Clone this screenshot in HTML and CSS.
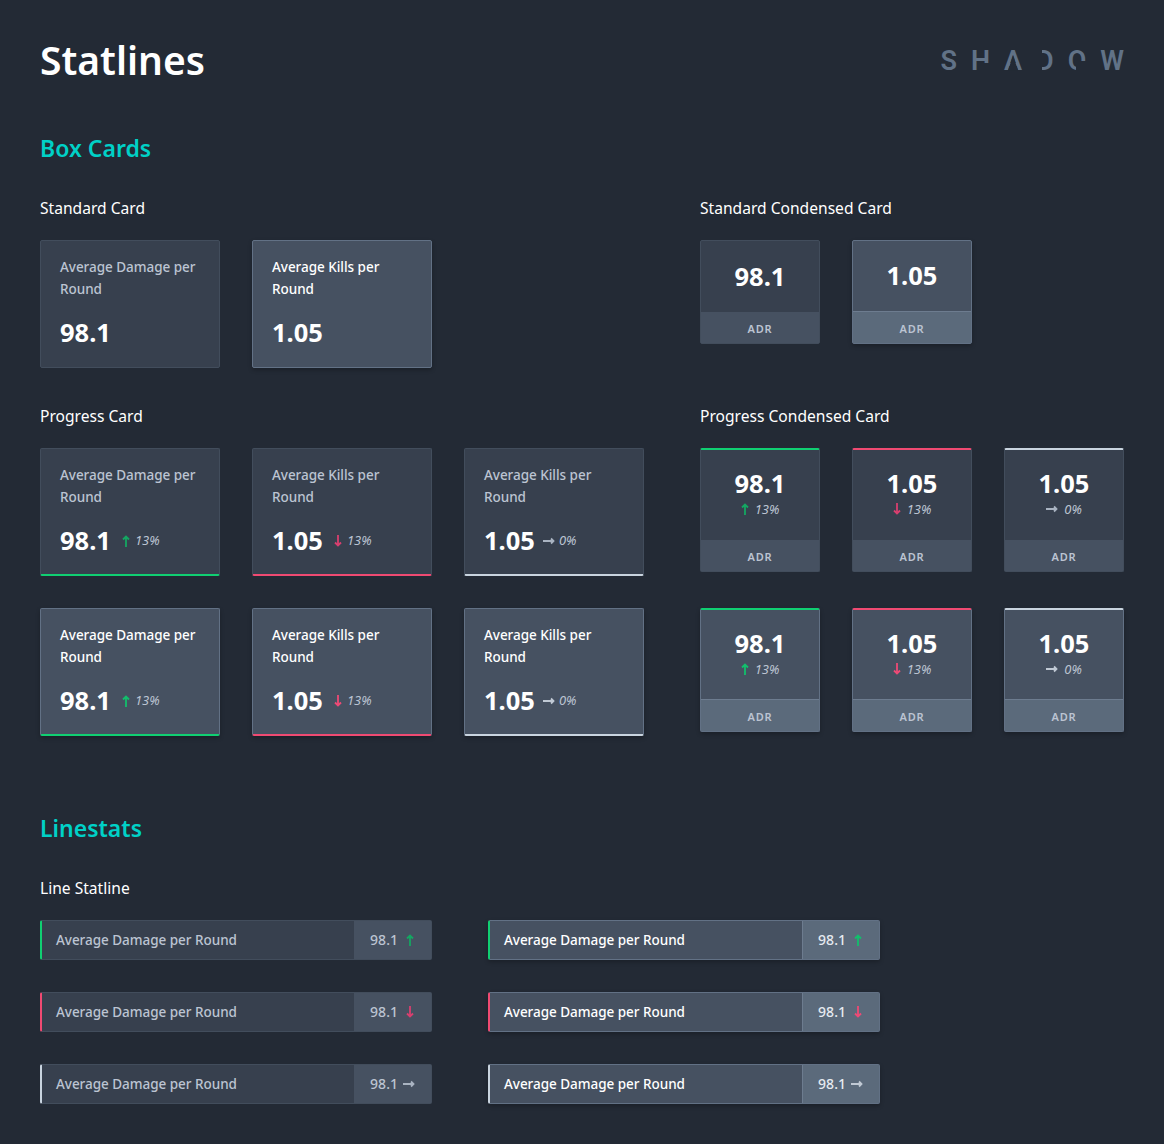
FILE: index.html
```html
<!DOCTYPE html>
<html lang="en">
  <head>
    <meta charset="UTF-8" />
    <meta name="viewport" content="width=device-width, initial-scale=1.0" />
    <title>Statlines</title>
    <link rel="stylesheet" href="styles.css">
  </head>
  <body>
    <svg class="sprites" width="0" height="0" aria-hidden="true">
      <symbol id="arrow-up" viewBox="0 0 8 12"><path d="M4 12V1.5M1 4.5L4 1.5L7 4.5" /></symbol>
      <symbol id="arrow-down" viewBox="0 0 8 12"><path d="M4 0V10.5M1 7.5L4 10.5L7 7.5" /></symbol>
      <symbol id="arrow-flat" viewBox="0 0 12 8"><path d="M0 4H10.5M8 1.5L10.5 4L8 6.5" /></symbol>
    </svg>

    <header class="page-header">
      <h1>Statlines</h1>
      <div class="logo"><span class="logo-s">S</span><span class="logo-h">H</span><span class="logo-a">A</span><span class="logo-d">D</span><span class="logo-o">O</span><span class="logo-w">W</span></div>
    </header>

    <h2 class="section-title section-box">Box Cards</h2>
    <div class="box-grid">
      <section>
        <h3>Standard Card</h3>
        <div class="card-row">
          <div class="card">
            <div class="card-label">Average Damage per Round</div>
            <div class="card-stat"><span class="stat-value">98.1</span></div>
          </div>
          <div class="card raised">
            <div class="card-label">Average Kills per Round</div>
            <div class="card-stat"><span class="stat-value">1.05</span></div>
          </div>
        </div>
      </section>

      <section>
        <h3>Standard Condensed Card</h3>
        <div class="card-row">
          <div class="mini">
            <div class="mini-body"><span class="stat-value">98.1</span></div>
            <div class="mini-foot">ADR</div>
          </div>
          <div class="mini raised">
            <div class="mini-body"><span class="stat-value">1.05</span></div>
            <div class="mini-foot">ADR</div>
          </div>
        </div>
      </section>

      <section>
        <h3>Progress Card</h3>
        <div class="card-row">
          <div class="card up">
            <div class="card-label">Average Damage per Round</div>
            <div class="card-stat"><span class="stat-value">98.1</span><svg class="arrow"><use href="#arrow-up" /></svg><span class="delta">13%</span></div>
          </div>
          <div class="card down">
            <div class="card-label">Average Kills per Round</div>
            <div class="card-stat"><span class="stat-value">1.05</span><svg class="arrow"><use href="#arrow-down" /></svg><span class="delta">13%</span></div>
          </div>
          <div class="card flat">
            <div class="card-label">Average Kills per Round</div>
            <div class="card-stat"><span class="stat-value">1.05</span><svg class="arrow"><use href="#arrow-flat" /></svg><span class="delta">0%</span></div>
          </div>
        </div>
        <div class="card-row">
          <div class="card raised up">
            <div class="card-label">Average Damage per Round</div>
            <div class="card-stat"><span class="stat-value">98.1</span><svg class="arrow"><use href="#arrow-up" /></svg><span class="delta">13%</span></div>
          </div>
          <div class="card raised down">
            <div class="card-label">Average Kills per Round</div>
            <div class="card-stat"><span class="stat-value">1.05</span><svg class="arrow"><use href="#arrow-down" /></svg><span class="delta">13%</span></div>
          </div>
          <div class="card raised flat">
            <div class="card-label">Average Kills per Round</div>
            <div class="card-stat"><span class="stat-value">1.05</span><svg class="arrow"><use href="#arrow-flat" /></svg><span class="delta">0%</span></div>
          </div>
        </div>
      </section>

      <section>
        <h3>Progress Condensed Card</h3>
        <div class="card-row mini-row">
          <div class="mini progress up">
            <div class="mini-body"><span class="stat-value">98.1</span><div class="mini-delta"><svg class="arrow"><use href="#arrow-up" /></svg><span class="delta">13%</span></div></div>
            <div class="mini-foot">ADR</div>
          </div>
          <div class="mini progress down">
            <div class="mini-body"><span class="stat-value">1.05</span><div class="mini-delta"><svg class="arrow"><use href="#arrow-down" /></svg><span class="delta">13%</span></div></div>
            <div class="mini-foot">ADR</div>
          </div>
          <div class="mini progress flat">
            <div class="mini-body"><span class="stat-value">1.05</span><div class="mini-delta"><svg class="arrow"><use href="#arrow-flat" /></svg><span class="delta">0%</span></div></div>
            <div class="mini-foot">ADR</div>
          </div>
        </div>
        <div class="card-row mini-row">
          <div class="mini progress raised up">
            <div class="mini-body"><span class="stat-value">98.1</span><div class="mini-delta"><svg class="arrow"><use href="#arrow-up" /></svg><span class="delta">13%</span></div></div>
            <div class="mini-foot">ADR</div>
          </div>
          <div class="mini progress raised down">
            <div class="mini-body"><span class="stat-value">1.05</span><div class="mini-delta"><svg class="arrow"><use href="#arrow-down" /></svg><span class="delta">13%</span></div></div>
            <div class="mini-foot">ADR</div>
          </div>
          <div class="mini progress raised flat">
            <div class="mini-body"><span class="stat-value">1.05</span><div class="mini-delta"><svg class="arrow"><use href="#arrow-flat" /></svg><span class="delta">0%</span></div></div>
            <div class="mini-foot">ADR</div>
          </div>
        </div>
      </section>
    </div>

    <h2 class="section-title section-line">Linestats</h2>
    <h3>Line Statline</h3>
    <div class="line-grid">
      <div class="line up">
        <span class="line-label">Average Damage per Round</span>
        <span class="line-value">98.1<svg class="arrow"><use href="#arrow-up" /></svg></span>
      </div>
      <div class="line raised up">
        <span class="line-label">Average Damage per Round</span>
        <span class="line-value">98.1<svg class="arrow"><use href="#arrow-up" /></svg></span>
      </div>
      <div class="line down">
        <span class="line-label">Average Damage per Round</span>
        <span class="line-value">98.1<svg class="arrow"><use href="#arrow-down" /></svg></span>
      </div>
      <div class="line raised down">
        <span class="line-label">Average Damage per Round</span>
        <span class="line-value">98.1<svg class="arrow"><use href="#arrow-down" /></svg></span>
      </div>
      <div class="line flat">
        <span class="line-label">Average Damage per Round</span>
        <span class="line-value">98.1<svg class="arrow"><use href="#arrow-flat" /></svg></span>
      </div>
      <div class="line raised flat">
        <span class="line-label">Average Damage per Round</span>
        <span class="line-value">98.1<svg class="arrow"><use href="#arrow-flat" /></svg></span>
      </div>
    </div>
  </body>
</html>
```
FILE: styles.css
```css
* {
    box-sizing: border-box;
}

body {
    margin: 0;
    padding: 35px 40px 40px;
    background-color: #232a35;
    color: #ffffff;
    font-family: "Noto Sans", Arial, sans-serif;
}

.sprites {
    position: absolute;
}

h1,
h2,
h3 {
    margin: 0;
}

/* Header */
.page-header {
    display: flex;
    justify-content: space-between;
    align-items: center;
}

h1 {
    font-size: 39px;
    line-height: 50px;
    font-weight: 600;
}

.logo {
    display: flex;
    gap: 14px;
    margin-top: 2px;
    font-family: Roboto, Arial, sans-serif;
    font-size: 27px;
    line-height: 27px;
    font-weight: 600;
    color: #617287;
}

.logo span {
    position: relative;
    display: block;
}

/* cortes del logo, tapan parte de la letra */
.logo-h::after,
.logo-a::after,
.logo-d::after,
.logo-o::after {
    content: "";
    position: absolute;
    background-color: #232a35;
}

.logo-h::after {
    right: 0;
    top: 15px;
    width: 9px;
    height: 12px;
}

.logo-a::after {
    left: 4px;
    right: 4px;
    top: 8px;
    height: 15px;
    clip-path: polygon(50% 0, 100% 100%, 0 100%);
}

.logo-d::after {
    left: 0;
    top: 0;
    width: 6px;
    height: 27px;
}

.logo-o::after {
    right: 0;
    top: 13px;
    width: 10px;
    height: 14px;
}

/* Titles */
.section-title {
    color: #00d1c7;
    font-size: 23px;
    line-height: 32px;
    font-weight: 600;
}

.section-box {
    margin-top: 47px;
    margin-bottom: 32px;
}

.section-line {
    margin-top: 76px;
    margin-bottom: 32px;
}

h3 {
    font-size: 15.6px;
    line-height: 24px;
    font-weight: 400;
    margin-bottom: 20px;
}

/* Box cards */
.box-grid {
    display: grid;
    grid-template-columns: 660px 1fr;
    row-gap: 36px;
}

.card-row {
    display: flex;
    gap: 32px;
}

.card-row + .card-row {
    margin-top: 32px;
}

.card-row.mini-row + .card-row.mini-row {
    margin-top: 36px;
}

.card,
.mini {
    border: 1px solid #424d5c;
    border-radius: 2px;
    background-color: #37404e;
}

.card {
    width: 180px;
    height: 128px;
    padding: 15px 19px;
}

.card-label {
    font-size: 13.5px;
    line-height: 22px;
    font-weight: 500;
    letter-spacing: -0.03px;
    color: #bcc4d2;
}

.card-stat {
    display: flex;
    align-items: center;
    height: 32px;
    margin-top: 17px;
}

.card-stat .stat-value {
    margin-top: -2px;
}

.card-stat .delta {
    margin-top: -2px;
}

.stat-value {
    font-size: 25.5px;
    line-height: 32px;
    font-weight: 700;
}

.delta {
    font-size: 13px;
    line-height: 16px;
    font-style: italic;
    color: #bcc4d2;
}

.arrow {
    display: block;
    flex: none;
    fill: none;
    stroke-width: 1.8;
    width: 8px;
    height: 12px;
    margin: 0 5px 0 11px;
}

.up .arrow {
    stroke: #14a762;
}

.down .arrow {
    stroke: #d83f6f;
}

.flat .arrow {
    stroke: #a9b3c1;
    width: 12px;
    height: 8px;
    margin: 0 4px 0 8px;
}

.raised.up .arrow {
    stroke: #12bf6c;
}

.raised.down .arrow {
    stroke: #ee4a76;
}

.raised.flat .arrow {
    stroke: #c0c9d4;
}

.card.up {
    border-bottom: 2px solid #10cf72;
}

.card.down {
    border-bottom: 2px solid #f04a72;
}

.card.flat {
    border-bottom: 2px solid #c9d4df;
}

.raised {
    background-color: #465161;
    border-color: #627185;
    box-shadow: 0 2px 4px rgba(0, 0, 0, 0.25);
}

.raised .card-label {
    color: #ffffff;
}

/* Condensed cards */
.mini {
    display: flex;
    flex-direction: column;
    width: 120px;
    height: 104px;
}

.mini-body {
    flex: 1;
    display: flex;
    flex-direction: column;
    align-items: center;
    justify-content: center;
    padding-bottom: 2px;
}

.mini-foot {
    height: 31px;
    background-color: #465161;
    color: #bcc4d2;
    font-size: 11px;
    line-height: 33px;
    font-weight: 600;
    letter-spacing: 0.8px;
    text-align: center;
}

.raised .mini-foot {
    height: 32px;
    line-height: 33px;
    background-color: #5b6a7b;
    border-top: 1px solid #6d7c8f;
}

.mini.progress {
    height: 124px;
    border-top-width: 2px;
}

.mini.progress .mini-body {
    justify-content: flex-start;
    padding-top: 17px;
}

.mini.up {
    border-top-color: #10cf72;
}

.mini.down {
    border-top-color: #f04a72;
}

.mini.flat {
    border-top-color: #c9d4df;
}

.mini-delta {
    display: flex;
    align-items: center;
    margin-top: 2px;
}

.mini-delta .arrow,
.flat .mini-delta .arrow {
    margin-left: 0;
}

.mini-delta .arrow {
    margin-right: 6px;
}

/* Linestats */
.line-grid {
    display: grid;
    grid-template-columns: 392px 392px;
    column-gap: 56px;
    row-gap: 32px;
}

.line {
    display: flex;
    height: 40px;
    border: 1px solid #424d5c;
    border-left-width: 2px;
    border-radius: 2px;
    background-color: #37404e;
    font-size: 13.5px;
    font-weight: 500;
}

.line.raised {
    background-color: #465161;
    border-color: #627185;
}

.line.up {
    border-left-color: #10cf72;
}

.line.down {
    border-left-color: #f04a72;
}

.line.flat {
    border-left-color: #c9d4df;
}

.line-label {
    flex: 1;
    padding-left: 14px;
    line-height: 38px;
    letter-spacing: -0.03px;
    color: #bcc4d2;
}

.line-value {
    display: flex;
    align-items: center;
    width: 77px;
    padding-left: 16px;
    padding-bottom: 2px;
    font-size: 14px;
    letter-spacing: 0.1px;
    background-color: #465161;
    color: #bcc4d2;
}

.raised .line-label {
    color: #ffffff;
}

.raised .line-value {
    padding-left: 15px;
    background-color: #5b6a7b;
    border-left: 1px solid #6d7c8f;
    color: #e6eaf0;
}

.line-value .arrow {
    margin-top: 2px;
    margin-left: 8px;
    margin-right: 0;
}

.flat.line .line-value .arrow {
    margin-left: 5px;
    margin-right: 0;
}
```
